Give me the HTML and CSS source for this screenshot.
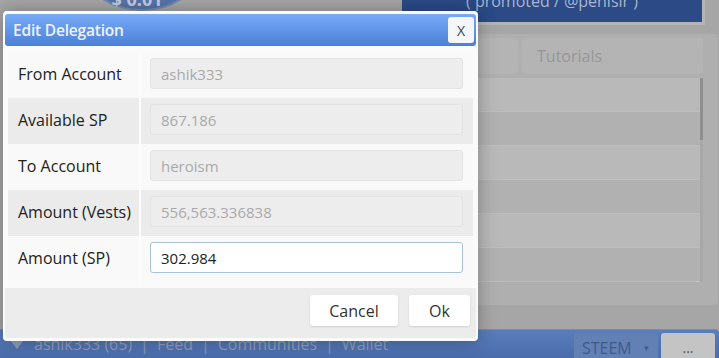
FILE: index.html
```html
<!DOCTYPE html>
<html lang="en">
<head>
    <meta charset="UTF-8">
    <title>Edit Delegation</title>
    <link rel="stylesheet" href="styles.css">
</head>
<body>

    <div class="app">
        <div class="main">
            <div class="left-col">
                <div class="balance"><span>$ 0.01</span></div>
            </div>
            <div class="right-col">
                <div class="promoted">( promoted / @penlsir )</div>
                <div class="panel">
                    <div class="tabs">
                        <div class="tab"></div>
                        <div class="tab">Tutorials</div>
                    </div>
                    <div class="list">
                        <div class="list-row"></div>
                        <div class="list-row"></div>
                        <div class="list-row"></div>
                        <div class="list-row"></div>
                        <div class="list-row"></div>
                        <div class="list-row"></div>
                        <div class="scroll-thumb"></div>
                    </div>
                </div>
            </div>
        </div>
        <div class="bottombar">
            <div class="nav">
                <span class="caret"></span>
                <span>ashik333 (65)</span>
                <span class="sep">|</span>
                <span>Feed</span>
                <span class="sep">|</span>
                <span>Communities</span>
                <span class="sep">|</span>
                <span>Wallet</span>
            </div>
            <div class="bar-buttons">
                <div class="coin">STEEM <small>▾</small></div>
                <div class="more">...</div>
            </div>
        </div>
    </div>

    <!-- modal over the dimmed page -->
    <div class="dialog">
        <div class="dialog-title">
            <span>Edit Delegation</span>
            <button class="close">X</button>
        </div>
        <div class="dialog-body">
            <div class="form-row">
                <label>From Account</label>
                <div class="cell"><input type="text" value="ashik333" disabled></div>
            </div>
            <div class="form-row">
                <label>Available SP</label>
                <div class="cell"><input type="text" value="867.186" disabled></div>
            </div>
            <div class="form-row">
                <label>To Account</label>
                <div class="cell"><input type="text" value="heroism" disabled></div>
            </div>
            <div class="form-row">
                <label>Amount (Vests)</label>
                <div class="cell"><input type="text" value="556,563.336838" disabled></div>
            </div>
            <div class="form-row">
                <label>Amount (SP)</label>
                <div class="cell"><input type="text" class="active" value="302.984"></div>
            </div>
        </div>
        <div class="dialog-footer">
            <button class="btn cancel">Cancel</button>
            <button class="btn ok">Ok</button>
        </div>
    </div>

</body>
</html>
```

FILE: styles.css
```css
* {
    margin: 0;
    padding: 0;
    box-sizing: border-box;
}
body {
    font-family: 'Open Sans', 'Noto Sans', sans-serif;
    background: #a6a6a6;
    width: 719px;
    height: 358px;
    overflow: hidden;
    position: relative;
}

/* dimmed page behind the modal */
.app {
    display: flex;
    flex-direction: column;
    height: 358px;
}
.main {
    display: flex;
    height: 329px;
}
.left-col {
    width: 402px;
    display: flex;
    justify-content: flex-start;
}
.balance {
    width: 150px;
    height: 150px;
    margin-top: -139px;
    margin-left: 67px;
    border-radius: 50%;
    background: #5874a8;
    border: 2px solid #7389b3;
    display: flex;
    align-items: flex-end;
    justify-content: center;
    padding-bottom: 1px;
}
.balance span {
    color: #c3cde0;
    font-weight: bold;
    font-size: 18px;
    line-height: 18px;
    margin-left: -10px;
}
.right-col {
    flex: 1;
    display: flex;
    flex-direction: column;
}
.promoted {
    width: 303px;
    height: 28px;
    margin-top: -3px;
    background: #2b4a86;
    border: 3px solid #b4b4b4;
    border-top: none;
    border-left: none;
    color: #aab6cf;
    font-size: 16px;
    line-height: 8px;
    text-align: center;
    overflow: hidden;
}
.panel {
    margin-top: 9px;
    margin-left: 36px;
    width: 280px;
    height: 271px;
    background: #afafaf;
    border-radius: 4px;
    padding: 4px 15px 0 6px;
}
.tabs {
    display: flex;
    gap: 4px;
    height: 36px;
}
.tab {
    flex: 1;
    background: #b4b4b4;
    border-radius: 4px;
    color: #979797;
    font-size: 16px;
    line-height: 36px;
    padding-left: 15px;
}
.tab:first-child {
    flex: 0 0 74px;
}
.list {
    margin-top: 4px;
    position: relative;
    border-right: 3px solid #a8a8a8;
}
.list-row {
    height: 34px;
    background: #b9b9b9;
    border-bottom: 1px solid #bdbdbd;
}
.list-row:nth-child(even) {
    background: #b1b1b1;
}
.scroll-thumb {
    position: absolute;
    right: -3px;
    top: 0;
    width: 3px;
    height: 62px;
    background: #8e8e8e;
}

.bottombar {
    height: 29px;
    background: linear-gradient(#5a7dbb, #4a6cab);
    border-top: 1px solid #6d8cc4;
    display: flex;
    justify-content: space-between;
    align-items: flex-end;
    padding-left: 10px;
    padding-right: 4px;
    border-top-right-radius: 4px;
}
.nav {
    display: flex;
    align-items: center;
    gap: 8px;
    color: #8d9bb8;
    font-size: 16px;
    height: 28px;
}
.nav .caret {
    margin-right: 2px;
}
.caret {
    width: 0;
    height: 0;
    border-left: 7.5px solid transparent;
    border-right: 7.5px solid transparent;
    border-top: 9px solid #8d9bb8;
}
.bar-buttons {
    display: flex;
    gap: 3px;
}
.coin {
    width: 84px;
    height: 25px;
    background: #6380b5;
    border-radius: 3px 3px 0 0;
    color: #3f5a8a;
    font-size: 16px;
    padding-left: 8px;
    line-height: 30px;
}
.coin small {
    font-size: 9px;
    margin-left: 8px;
    vertical-align: 3px;
}
.more {
    width: 54px;
    height: 25px;
    background: #c4c4c4;
    border-radius: 3px 3px 0 0;
    color: #555;
    font-size: 14px;
    text-align: center;
    line-height: 30px;
}

/* modal */
.dialog {
    position: absolute;
    left: 3px;
    top: 11px;
    width: 475px;
    height: 330px;
    background: #fafafa;
    border-radius: 4px;
    padding: 3px 2px;
    box-shadow: 0 0 18px rgba(0, 0, 0, 0.3);
    display: flex;
    flex-direction: column;
}
.dialog-title {
    height: 32px;
    background: linear-gradient(#77aaf7, #4b80d7);
    border-radius: 3px;
    display: flex;
    align-items: center;
    justify-content: space-between;
    padding: 0 2px 0 8px;
    color: #eef4ff;
    font-size: 15.5px;
    font-weight: 600;
    letter-spacing: -0.2px;
}
.close {
    width: 26px;
    height: 26px;
    border: none;
    border-radius: 3px;
    background: #f4f6fa;
    color: #444;
    font-family: 'Open Sans', sans-serif;
    font-size: 14px;
}
.dialog-body {
    margin: 6px 3px 0;
    height: 230px;
}
.form-row {
    display: flex;
    height: 46px;
    background: #f9f9f9;
}
.form-row:nth-child(even) {
    background: #ebebeb;
}
.form-row label {
    width: 133px;
    border-right: 2px solid #fcfcfc;
    padding-left: 10px;
    font-size: 16px;
    color: #222;
    line-height: 44px;
}
.cell {
    flex: 1;
    padding: 6px 10px 0 9px;
}
.cell input {
    width: 100%;
    height: 31px;
    background: #ededed;
    border: 1px solid #e3e3e3;
    border-radius: 3px;
    padding-left: 10px;
    font-family: 'Open Sans', sans-serif;
    font-size: 15px;
    color: #aaa;
}
.cell input.active {
    background: #fff;
    border-color: #a9c2db;
    color: #222;
}
.dialog-footer {
    margin-top: 6px;
    flex: 1;
    background: #ececec;
    border-radius: 0 0 3px 3px;
    display: flex;
    justify-content: flex-end;
    align-items: flex-start;
    gap: 11px;
    padding: 7px 6px 0 0;
}
.btn {
    height: 31px;
    border: none;
    border-radius: 3px;
    background: #fff;
    box-shadow: 0 1px 2px rgba(0, 0, 0, 0.12);
    font-family: 'Open Sans', sans-serif;
    font-size: 16px;
    color: #333;
}
.cancel {
    width: 88px;
}
.ok {
    width: 61px;
}
```
